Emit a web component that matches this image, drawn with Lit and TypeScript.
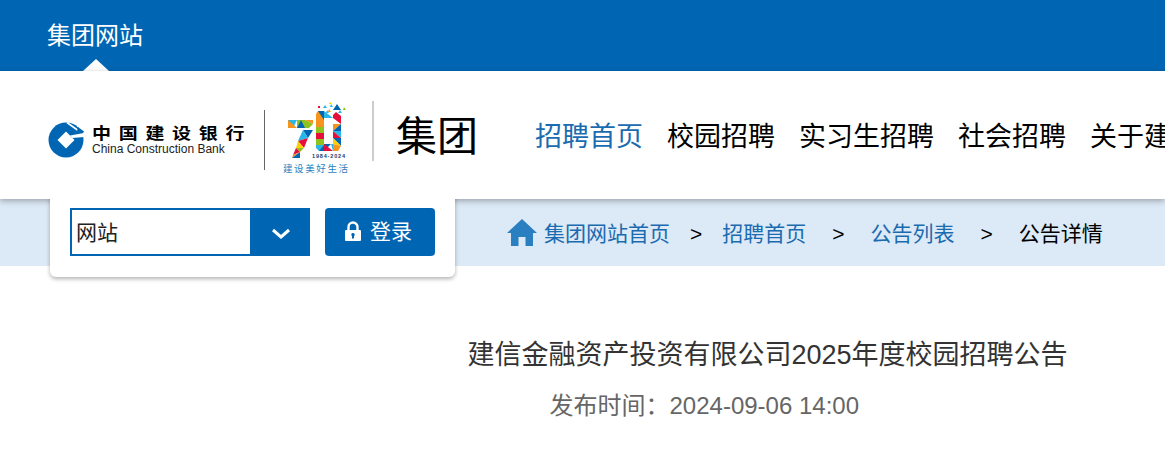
import { LitElement, html, css, svg } from "lit";
import { customElement } from "lit/decorators.js";

const O = "#f7941d", B = "#0066b3", C = "#29b6e8", G = "#8dc21f", R = "#e60f3c", Y = "#fdd000", W = "#ffffff";
// [colour, points]
const shards: [string, string][] = [
  // seven, top bar
  [C, "288,118 297,118 293,126 288,126"], [O, "288,118 288,126 297,126"], [G, "297,118 305,118 305,126 297,126"],
  [B, "297,126 305,126 301,118"], [O, "305,118 313,118 313,122"], [G, "305,118 313,122 309,126 305,126"],
  // seven, diagonal
  [B, "303,128 313,128 308,136"], [C, "303,128 308,136 298,139"], [R, "308,136 298,139 304,146"],
  [Y, "298,139 304,146 296,146"], [G, "296,146 304,146 300,150"], [R, "296,146 300,150 293,153"],
  [O, "300,150 293,153 292,156"], [B, "300,150 292,156 300,156"],
  // zero, left column
  [O, "316,112 318,109 324,109 324,118 316,118"], [B, "324,109 324,118 318,109"], [O, "316,118 324,118 324,125 316,125"],
  [G, "316,125 324,125 324,131 316,131"], [R, "316,131 324,131 324,137 316,137"], [G, "316,137 324,137 324,143 316,143"],
  [C, "316,143 324,143 324,149 319,149 316,146"], [B, "319,149 324,143 324,149"],
  // zero, right column
  [C, "324,109 333,116 324,116"], [R, "333,113 336,110 341,114 341,122 333,122"], [W, "333,116 341,122 333,122"],
  [O, "333,122 341,122 333,129"], [B, "341,122 341,129 333,129"], [C, "333,129 341,129 341,136"],
  [R, "333,129 341,136 333,136"], [B, "333,136 341,136 341,144"], [Y, "333,136 341,144 333,142"],
  [O, "333,142 341,144 338,149 333,149"],
  // zero, bottom
  [B, "324,142 331,142 324,149"], [R, "324,142 333,149 324,149"], [C, "331,142 333,142 333,149"],
  // confetti
  [R, "318,104 320,104 320,106 318,106"], [C, "323,106 327,106 325,103"], [O, "328,110 331,110 329,107"],
  [B, "333,108 341,108 337,102"], [G, "343,108 346,108 344,105"], [C, "330,105 333,105 331,102"],
  [C, "326,111 329,111 327,108"], [C, "338,111 342,111 340,108"], [Y, "329,102 332,102 330,100"],
];

@customElement("app-root")
export class AppRoot extends LitElement {
  static styles = css`
    :host {
      display: block;
      width: 1165px;
      height: 456px;
      overflow: hidden;
      background: #fff;
      font-family: "Liberation Sans", "Noto Sans CJK SC", sans-serif;
      color: #000;
    }
    .top {
      position: relative;
      height: 71px;
      background: #0066b3;
      color: #fff;
      font-size: 24px;
      line-height: 71px;
      padding-left: 47px;
      box-sizing: border-box;
    }
    .notch {
      position: absolute;
      left: 83px;
      bottom: 0;
      width: 0;
      height: 0;
      border-left: 13px solid transparent;
      border-right: 13px solid transparent;
      border-bottom: 12px solid #fff;
    }
    .head {
      position: relative;
      z-index: 1;
      height: 128px;
      background: #fff;
      box-shadow: 0 2px 6px rgba(0, 0, 0, 0.3);
      display: flex;
      align-items: center;
      padding-left: 48px;
      white-space: nowrap;
      overflow: hidden;
    }
    .head > * {
      flex: none;
    }
    .ccb {
      display: block;
      width: 36px;
      height: 36px;
      margin-top: 9px;
    }
    .mark {
      margin-left: 8px;
      width: 153px;
      margin-top: 11px;
    }
    .mark-cn {
      font-size: 19px;
      font-weight: 700;
      letter-spacing: 7.7px;
      line-height: 17px;
      transform: scaleY(0.85);
      transform-origin: left center;
    }
    .mark-en {
      font-size: 12px;
      line-height: 13px;
      margin-top: 1px;
      color: #222;
    }
    .rule-a {
      width: 1px;
      height: 60px;
      background: #666;
      margin: 10px 15px 0 19px;
    }
    .seventy {
      display: block;
      width: 70px;
      height: 75px;
      margin-top: 8px;
    }
    .seventy text {
      font-family: "Liberation Sans", "Noto Sans CJK SC", sans-serif;
    }
    .rule-b {
      width: 2px;
      height: 60px;
      background: #ccc;
      margin: -8px 22px 0 22px;
    }
    .group {
      font-size: 41px;
      width: 82px;
      margin-top: -5px;
    }
    .nav {
      display: flex;
      gap: 24px;
      margin-left: 57px;
      margin-top: -2px;
      font-size: 27px;
    }
    .nav .on {
      color: #1a6bb0;
    }
    .band {
      position: relative;
      height: 67px;
      box-sizing: border-box;
      padding: 0 0 2px 508px;
      background: #dce9f6;
      display: flex;
      align-items: center;
      font-size: 21px;
      white-space: nowrap;
    }
    .home {
      display: block;
      width: 30px;
      height: 28px;
      margin: 2px 6px 0 -1px;
    }
    .band a {
      color: #1a6bb0;
      text-decoration: none;
    }
    .crumbs {
      display: flex;
      align-items: baseline;
      margin-left: 1px;
    }
    .sep {
      margin: 0 20px;
    }
    .sep.wide {
      margin: 0 26px;
    }
    .panel {
      position: absolute;
      z-index: 2;
      left: 50px;
      top: -9px;
      width: 405px;
      height: 87px;
      box-sizing: border-box;
      padding: 18px 0 0 20px;
      background: #fff;
      border-radius: 0 0 6px 6px;
      box-shadow: 0 2px 4px rgba(0, 0, 0, 0.3);
      display: flex;
      align-items: flex-start;
      clip-path: inset(9px -10px -10px -10px);
    }
    .select {
      display: flex;
      width: 240px;
      height: 48px;
      box-sizing: border-box;
      border: 2px solid #0066b3;
      border-right: 0;
    }
    .field {
      width: 178px;
      padding-left: 4px;
      box-sizing: border-box;
      line-height: 46px;
      font-size: 21px;
      background: #fff;
      color: #222;
    }
    .drop {
      flex: 1;
      background: #0066b3;
      display: flex;
      align-items: center;
      justify-content: center;
    }
    .drop svg {
      display: block;
      width: 20px;
      height: 12px;
      margin: 4px 0 0 2px;
    }
    .login {
      margin-left: 15px;
      width: 110px;
      height: 48px;
      border-radius: 4px;
      background: #0066b3;
      color: #fff;
      font-size: 21px;
      line-height: 48px;
      display: flex;
      align-items: flex-start;
      padding-left: 20px;
      box-sizing: border-box;
    }
    .login svg {
      display: block;
      width: 16px;
      height: 20px;
      margin: 13px 9px 0 0;
    }
    .article {
      padding-top: 71px;
      white-space: nowrap;
    }
    .title {
      margin-left: 467.5px;
      font-size: 27px;
      line-height: 36px;
      color: #333;
    }
    .date {
      margin: 16px 0 0 549.5px;
      font-size: 24px;
      line-height: 34px;
      color: #666;
    }
  `;

  private ccb() {
    return html`<svg class="ccb" viewBox="0 0 36 36">
      <circle cx="18" cy="18" r="17.5" fill="#0066b3"></circle>
      <path d="M18 9.5 L26.5 18 L18 26.5 L9.5 18 Z" fill="#fff"></path>
      <path d="M19 0.5 L35 12" fill="none" stroke="#fff" stroke-width="1.7"></path>
      <path d="M30 5 L36 9.5 L34 13 L29 9 Z" fill="#0066b3"></path>
      <path d="M22 13.5 L36 11 L36 15 L24.5 16 Z" fill="#fff"></path>
    </svg>`;
  }

  private seventy() {
    return html`<svg class="seventy" viewBox="280 100 70 75">
      ${shards.map(([c, p]) => svg`<polygon fill=${c} points=${p}></polygon>`)}
      <text x="312" y="156" font-size="5.5" font-weight="700" fill="#1a3c6e" textLength="33">1984-2024</text>
      <text x="283" y="170" font-size="9.5" fill="#2a7fc0" textLength="65">建设美好生活</text>
    </svg>`;
  }

  render() {
    return html`
      <div class="top">集团网站<span class="notch"></span></div>
      <header class="head">
        ${this.ccb()}
        <div class="mark">
          <div class="mark-cn">中国建设银行</div>
          <div class="mark-en">China Construction Bank</div>
        </div>
        <div class="rule-a"></div>
        ${this.seventy()}
        <div class="rule-b"></div>
        <div class="group">集团</div>
        <nav class="nav">
          <span class="on">招聘首页</span>
          <span>校园招聘</span>
          <span>实习生招聘</span>
          <span>社会招聘</span>
          <span>关于建行</span>
        </nav>
      </header>
      <div class="band">
        <div class="panel">
          <div class="select">
            <div class="field">网站</div>
            <div class="drop">
              <svg viewBox="0 0 20 12"><path d="M2 2 L10 9 L18 2" fill="none" stroke="#fff" stroke-width="3"></path></svg>
            </div>
          </div>
          <div class="login">
            <svg viewBox="0 0 16 20">
              <path d="M3.5 9 V6 a4.5 4.5 0 0 1 9 0 V9" fill="none" stroke="#fff" stroke-width="2.4"></path>
              <path fill-rule="evenodd" d="M1 9 H15 a1 1 0 0 1 1 1 V19 a1 1 0 0 1 -1 1 H1 a1 1 0 0 1 -1 -1 V10 a1 1 0 0 1 1 -1 Z M8 12 a1.7 1.7 0 0 0 -1 3.1 V17.5 H9 V15.1 A1.7 1.7 0 0 0 8 12 Z" fill="#fff"></path>
            </svg>
            登录
          </div>
        </div>
        <svg class="home" viewBox="0 0 30 28"><path d="M15 0 L30 14 H26 V27 H18.5 V18 H11.5 V27 H4 V14 H0 Z" fill="#2a7fc0"></path></svg>
        <div class="crumbs">
          <a>集团网站首页</a>
          <span class="sep">&gt;</span>
          <a>招聘首页</a>
          <span class="sep wide">&gt;</span>
          <a>公告列表</a>
          <span class="sep wide">&gt;</span>
          <span>公告详情</span>
        </div>
      </div>
      <main class="article">
        <div class="title">建信金融资产投资有限公司2025年度校园招聘公告</div>
        <div class="date">发布时间：2024-09-06 14:00</div>
      </main>
    `;
  }
}
